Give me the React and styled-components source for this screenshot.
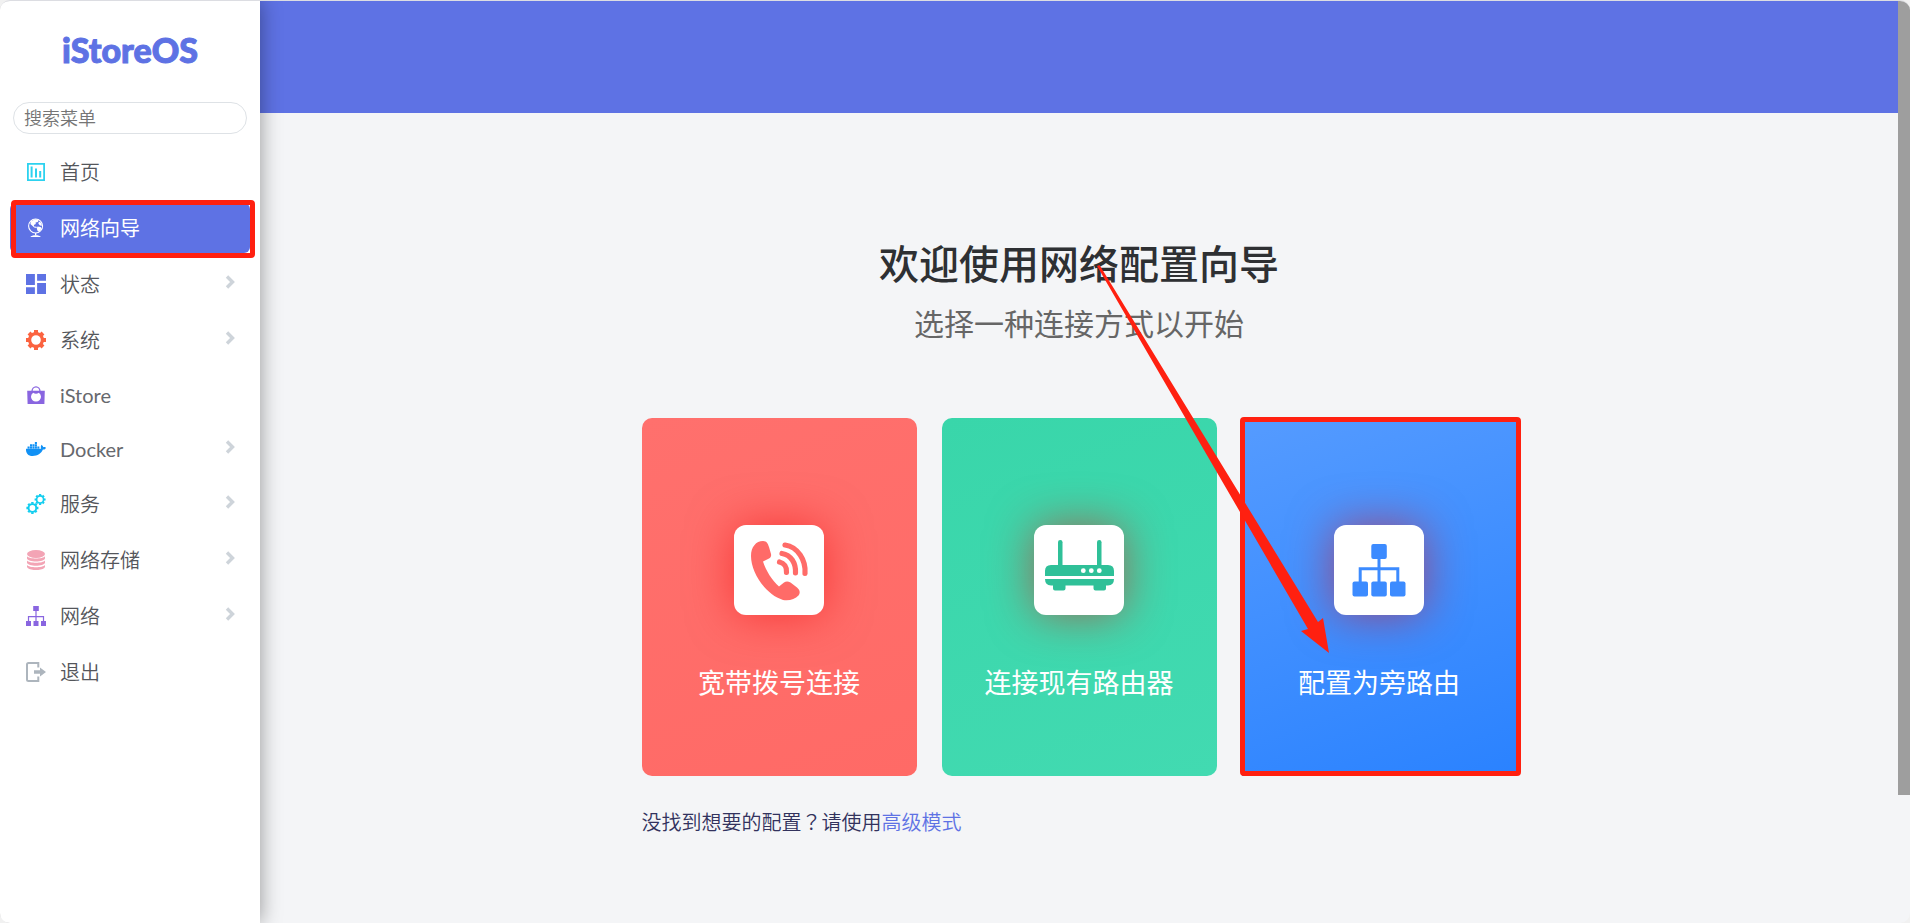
import React, { useState } from 'react';
import styled, { createGlobalStyle, css } from 'styled-components';
import { FaDocker } from 'react-icons/fa';
import { MdDashboard } from 'react-icons/md';

const GlobalStyle = createGlobalStyle`
  * {
    box-sizing: border-box;
  }

  body {
    margin: 0;
    background: #f1f1f1;
    color: #32325d;
    font-family: Lato, 'Noto Sans CJK SC', sans-serif;
  }

  a {
    color: #5e72e4;
    text-decoration: none;
  }
`;

// --- LAYOUT ---

const Shell = styled.div`
  display: flex;
  min-height: 100vh;
  border-top: 1px solid #dcdde2;
  border-radius: 10px;
  overflow: hidden;
  background: #f4f5f7;
`;

const Sidebar = styled.aside`
  position: relative;
  z-index: 1;
  flex: 0 0 260px;
  background: #ffffff;
  box-shadow: 0 0 20px rgba(0, 0, 0, 0.4);
`;

const Main = styled.main`
  flex: 1;
  min-width: 0;
`;

const Banner = styled.header`
  height: 112px;
  background: #5e72e4;
`;

const ScrollTrack = styled.div`
  flex: 0 0 12px;
`;

const ScrollThumb = styled.div`
  height: 86vh;
  background: #9e9e9e;
`;

// --- SIDEBAR ---

const Brand = styled.a`
  display: block;
  padding: 27px 0 30px;
  font-family: Lato, sans-serif;
  font-size: 34px;
  font-weight: 900;
  line-height: 44px;
  text-align: center;
  -webkit-text-stroke: 1px #5e72e4;
`;

const SearchInput = styled.input`
  display: block;
  width: calc(100% - 26px);
  height: 32px;
  margin: 0 13px;
  padding: 0 10px;
  border: 1px solid #dee2e6;
  border-radius: 16px;
  outline: none;
  background: #ffffff;
  color: #525f7f;
  font-family: inherit;
  font-size: 18px;
  font-weight: 350;

  &::placeholder {
    color: #757575;
    opacity: 1;
  }
`;

const Menu = styled.ul`
  display: flex;
  flex-direction: column;
  gap: 6px;
  margin: 13px 0 0;
  padding: 0 10px;
  list-style: none;
`;

const redFrame = css`
  &::after {
    content: '';
    position: absolute;
    border: 5px solid #ff2010;
    border-radius: 4px;
    pointer-events: none;
  }
`;

const MenuLink = styled.a`
  position: relative;
  display: flex;
  align-items: center;
  gap: 14px;
  padding: 10px 14px 10px 16px;
  border-radius: 6px;
  color: ${({ $latin }) => ($latin ? '#66686d' : '#54565b')};
  font-size: 20px;
  font-weight: ${({ $latin }) => ($latin ? 400 : 350)};
  line-height: ${({ $latin }) => ($latin ? '28px' : '30px')};

  ${({ $active }) =>
    $active &&
    css`
      background: #5e72e4;
      color: #ffffff;
      font-weight: 400;
      ${redFrame}

      &::after {
        inset: -3px -5px -5px 1px;
      }
    `}
`;

const MenuIcon = styled.span`
  display: flex;
  width: 20px;
  height: 20px;
  color: ${({ $color }) => $color};

  svg {
    width: 100%;
    height: 100%;
  }
`;

const MenuText = styled.span`
  flex: 1;
`;

const Chevron = styled.svg`
  width: 12px;
  height: 14px;
  margin-bottom: 4px;
  fill: none;
  stroke: #ced4da;
  stroke-width: 3.4;
`;

// --- WIZARD ---

const Wizard = styled.section`
  max-width: 875px;
  margin: 0 auto;
  padding: 121px 0 40px;
`;

const Title = styled.h1`
  margin: 0;
  color: #2e3033;
  font-size: 40px;
  font-weight: 500;
  line-height: 60px;
  text-align: center;
`;

const Subtitle = styled.p`
  margin: 9px 0 75px;
  color: #666666;
  font-size: 30px;
  line-height: 40px;
  text-align: center;
`;

const CardGrid = styled.div`
  position: relative;
  display: grid;
  grid-template-columns: repeat(3, 1fr);
  gap: 25px;
`;

const Card = styled.a`
  position: relative;
  display: flex;
  flex-direction: column;
  align-items: center;
  gap: 48px;
  padding: 107px 0 73px;
  border-radius: 10px;
  background: linear-gradient(160deg, ${({ $from }) => $from}, ${({ $to }) => $to});
  color: #ffffff;

  ${({ $framed }) =>
    $framed &&
    css`
      border-radius: 0;
      ${redFrame}

      &::after {
        inset: -1px -4px 0 -2px;
      }
    `}
`;

const CardTile = styled.span`
  display: block;
  width: 90px;
  height: 90px;
  border-radius: 12px;
  background: #ffffff;
  box-shadow: 0 0 45px rgba(240, 0, 0, 0.5);

  svg {
    display: block;
  }
`;

const CardLabel = styled.span`
  font-size: 27px;
  line-height: 40px;
`;

const Arrow = styled.svg`
  position: absolute;
  top: -154px;
  left: 454px;
  fill: #ff2010;
  pointer-events: none;
`;

const Hint = styled.p`
  margin: 31px 0 0;
  font-size: 20px;
  font-weight: 350;
  line-height: 30px;
`;

// the TC face centres the full-width mark in its cell
const CenteredMark = styled.span`
  font-family: 'Noto Sans CJK TC', sans-serif;
`;

// --- ICONS ---

const HomeIcon = () => (
  <svg viewBox="0 0 20 20" fill="currentColor">
    <path fillRule="evenodd" d="M1 1h18v18H1zM2.8 2.8v14.4h14.4V2.8z" />
    <path d="M4.6 4.5h2v11h-2zM9 6.5h2v9H9zM13.2 9h2v6.5h-2z" />
  </svg>
);

const GlobeIcon = () => (
  <svg viewBox="0 0 20 20" fill="currentColor">
    <circle cx="9.6" cy="8" r="7" fill="none" stroke="currentColor" strokeWidth="1.1" />
    <path d="M5 3.2 9 1.2l3.6.6-.8 2.2-2.2.5.2 1.6-2 .8.4 1.6 2.4.2.2 1.3-2.6-.5L4.4 6z" />
    <path d="M11.5 8.4l3.2.7.8 1.6-2.4 3-1.5-.7-.8-2.5zM12.8 3.6l2.6 1.3.6 2.8-2-.2-1.6-1.7z" />
    <path d="M9 15h1.3v2.6H9z" />
    <path d="M4.4 19c.4-1.3 2.8-1.8 5.2-1.8s4.8.5 5.2 1.8z" />
  </svg>
);

const Gear = ({ transform }) => (
  <g transform={transform} stroke="currentColor" fill="none">
    <circle cx="10" cy="10" r="6.4" strokeWidth="3.2" />
    <path
      strokeWidth="4"
      d="M10 0v3M10 17v3M0 10h3M17 10h3M3 3l2 2M15 15l2 2M3 17l2-2M15 5l2-2"
    />
  </g>
);

const GearIcon = () => (
  <svg viewBox="0 0 20 20">
    <Gear />
  </svg>
);

const GearsIcon = () => (
  <svg viewBox="0 0 20 20">
    <Gear transform="translate(.4 8) scale(.6)" />
    <Gear transform="translate(8.6 0) scale(.55)" />
  </svg>
);

const BagIcon = () => (
  <svg viewBox="0 0 20 20">
    <path d="M6 6.5a4 4.6 0 0 1 8 0" fill="none" stroke="currentColor" strokeWidth="1.3" />
    <path
      fill="currentColor"
      fillRule="evenodd"
      d="M1.2 5.8h17.6L18.4 19H1.6zM7.2 7.8Q10 9.6 12.800 7.8A5 4.800 0 1 1 7.200 7.800z"
    />
  </svg>
);

const DiskIcon = () => (
  <svg viewBox="0 0 20 20" fill="currentColor">
    <ellipse cx="10" cy="4" rx="9" ry="4" />
    <path d="M1 6.3c2 3 16 3 18 0v2.2c-1 4-17 4-18 0z" />
    <path d="M1 10.6c2 3 16 3 18 0v2.2c-1 4-17 4-18 0z" />
    <path d="M1 14.9c2 3 16 3 18 0v2.2c-1 4-17 4-18 0z" />
  </svg>
);

const NetworkIcon = () => (
  <svg viewBox="0 0 20 20" fill="currentColor">
    <path d="M7.2 0h5.6v5H7.2zM0 15h5v5H0zM7.5 15h5v5h-5zM15 15h5v5h-5z" />
    <path d="M2.5 15v-4.3h15V15M10 5v10" fill="none" stroke="currentColor" strokeWidth="1.2" />
  </svg>
);

const ExitIcon = () => (
  <svg viewBox="0 0 20 20">
    <path
      d="M12.3 5.5V1H2.5Q1 1 1 2.5v15Q1 19 2.5 19h9.8v-4.5"
      fill="none"
      stroke="currentColor"
      strokeWidth="2"
    />
    <path d="M8 8.2h6V5.5l6 4.5-6 4.5v-2.7H8z" fill="currentColor" />
  </svg>
);

const PhoneIcon = () => (
  <svg width="90" height="90" viewBox="0 0 90 90">
    <path
      fill="#ff6b68"
      d="M29 16C33 16 34 19 35 22L37 29C37.5 31.5 36.5 32.5 35 33.5L29 36.5C32 46 38 55 45 61.5L50 57.5C52 56 54 56 56.5 57.5L63 62.5C66 65 66.5 68 64.5 70.5C61 74.5 55 76 49 75C32 70 17 48 17 31C17 22 22 16 29 16Z"
    />
    <path
      fill="none"
      stroke="#ff6b68"
      strokeWidth="5.2"
      strokeLinecap="round"
      d="M51 20C64 22 72 35 71 48.5M48 28.500C57 30 62 38 61.5 48M45.5 37C50 38 53 42 52.5 47.5"
    />
  </svg>
);

const RouterIcon = () => (
  <svg width="90" height="90" viewBox="0 0 90 90" fill="#2fc098">
    <rect x="24" y="15" width="4.5" height="28" rx="2.2" />
    <rect x="63" y="15" width="4.5" height="28" rx="2.2" />
    <path d="M11 51v-5q0-6 6-6h57q6 0 6 6v5zM11 54h69q0 6-6 6.5h-2v3q0 2-2 2h-8.5q-2 0-2-2v-3h-28v3q0 2-2 2H21q-2 0-2-2v-3h-2q-6-.5-6-6.5z" />
    <g fill="#ffffff">
      <circle cx="49.3" cy="45.7" r="2.4" />
      <circle cx="57.3" cy="45.7" r="2.4" />
      <circle cx="65.3" cy="45.7" r="2.4" />
    </g>
  </svg>
);

const BypassIcon = () => (
  <svg width="90" height="90" viewBox="0 0 90 90" fill="#3c8bff">
    <rect x="37.3" y="19" width="15.5" height="15" rx="2" />
    <rect x="18.5" y="56.5" width="15.5" height="15" rx="2" />
    <rect x="37.3" y="56.5" width="15.5" height="15" rx="2" />
    <rect x="56" y="56.5" width="15.5" height="15" rx="2" />
    <path d="M26.2 57V43.7h37.6V57M45 33v24" fill="none" stroke="#3c8bff" strokeWidth="3" />
  </svg>
);

// --- DATA ---

const menuItems = [
  { text: '首页', icon: HomeIcon, color: '#2dd2ef' },
  { text: '网络向导', icon: GlobeIcon, color: '#ffffff' },
  { text: '状态', icon: MdDashboard, color: '#5e72e4', crop: true, children: true },
  { text: '系统', icon: GearIcon, color: '#fb6340', children: true },
  { text: 'iStore', icon: BagIcon, color: '#8965e0', latin: true },
  { text: 'Docker', icon: FaDocker, color: '#1191f5', latin: true, children: true },
  { text: '服务', icon: GearsIcon, color: '#11cdef', children: true },
  { text: '网络存储', icon: DiskIcon, color: '#f3a4b5', children: true },
  { text: '网络', icon: NetworkIcon, color: '#8965e0', children: true },
  { text: '退出', icon: ExitIcon, color: '#adb5bd' },
];

const cards = [
  { label: '宽带拨号连接', icon: PhoneIcon, from: '#ff706d', to: '#ff6a66' },
  { label: '连接现有路由器', icon: RouterIcon, from: '#39d6aa', to: '#42dab1' },
  { label: '配置为旁路由', icon: BypassIcon, from: '#559bff', to: '#2a82ff', framed: true },
];

// --- COMPONENTS ---

const SideMenu = () => {
  const [active, setActive] = useState('网络向导');

  return (
    <nav>
      <Menu>
        {menuItems.map(({ text, icon: Icon, color, crop, latin, children }) => (
          <li key={text}>
            <MenuLink href="#" $latin={latin} $active={active === text} onClick={() => setActive(text)}>
              <MenuIcon $color={color}>
                {crop ? <Icon viewBox="3 3 18 18" /> : <Icon />}
              </MenuIcon>
              <MenuText>{text}</MenuText>
              {children && (
                <Chevron viewBox="0 0 12 14">
                  <path d="M3 1.5 8.5 7 3 12.5" />
                </Chevron>
              )}
            </MenuLink>
          </li>
        ))}
      </Menu>
    </nav>
  );
};

const App = () => {
  const [search, setSearch] = useState('');

  return (
    <>
      <GlobalStyle />
      <Shell>
        <Sidebar>
          <Brand href="#">iStoreOS</Brand>
          <SearchInput
            type="text"
            aria-label="搜索菜单"
            placeholder="搜索菜单"
            value={search}
            onChange={(e) => setSearch(e.target.value)}
          />
          <SideMenu />
        </Sidebar>

        <Main>
          <Banner />
          <Wizard>
            <Title>欢迎使用网络配置向导</Title>
            <Subtitle>选择一种连接方式以开始</Subtitle>
            <CardGrid>
              {cards.map(({ label, icon: Icon, from, to, framed }) => (
                <Card key={label} href="#" $from={from} $to={to} $framed={framed}>
                  <CardTile>
                    <Icon />
                  </CardTile>
                  <CardLabel>{label}</CardLabel>
                </Card>
              ))}
              <Arrow width="236" height="390" viewBox="0 0 236 390">
                <path d="M1 2 3.5 1 222 358 227 354 233 389 205 367 212 365z" />
              </Arrow>
            </CardGrid>
            <Hint>
              没找到想要的配置<CenteredMark>？</CenteredMark>请使用<a href="#">高级模式</a>
            </Hint>
          </Wizard>
        </Main>

        <ScrollTrack>
          <ScrollThumb />
        </ScrollTrack>
      </Shell>
    </>
  );
};

export default App;
